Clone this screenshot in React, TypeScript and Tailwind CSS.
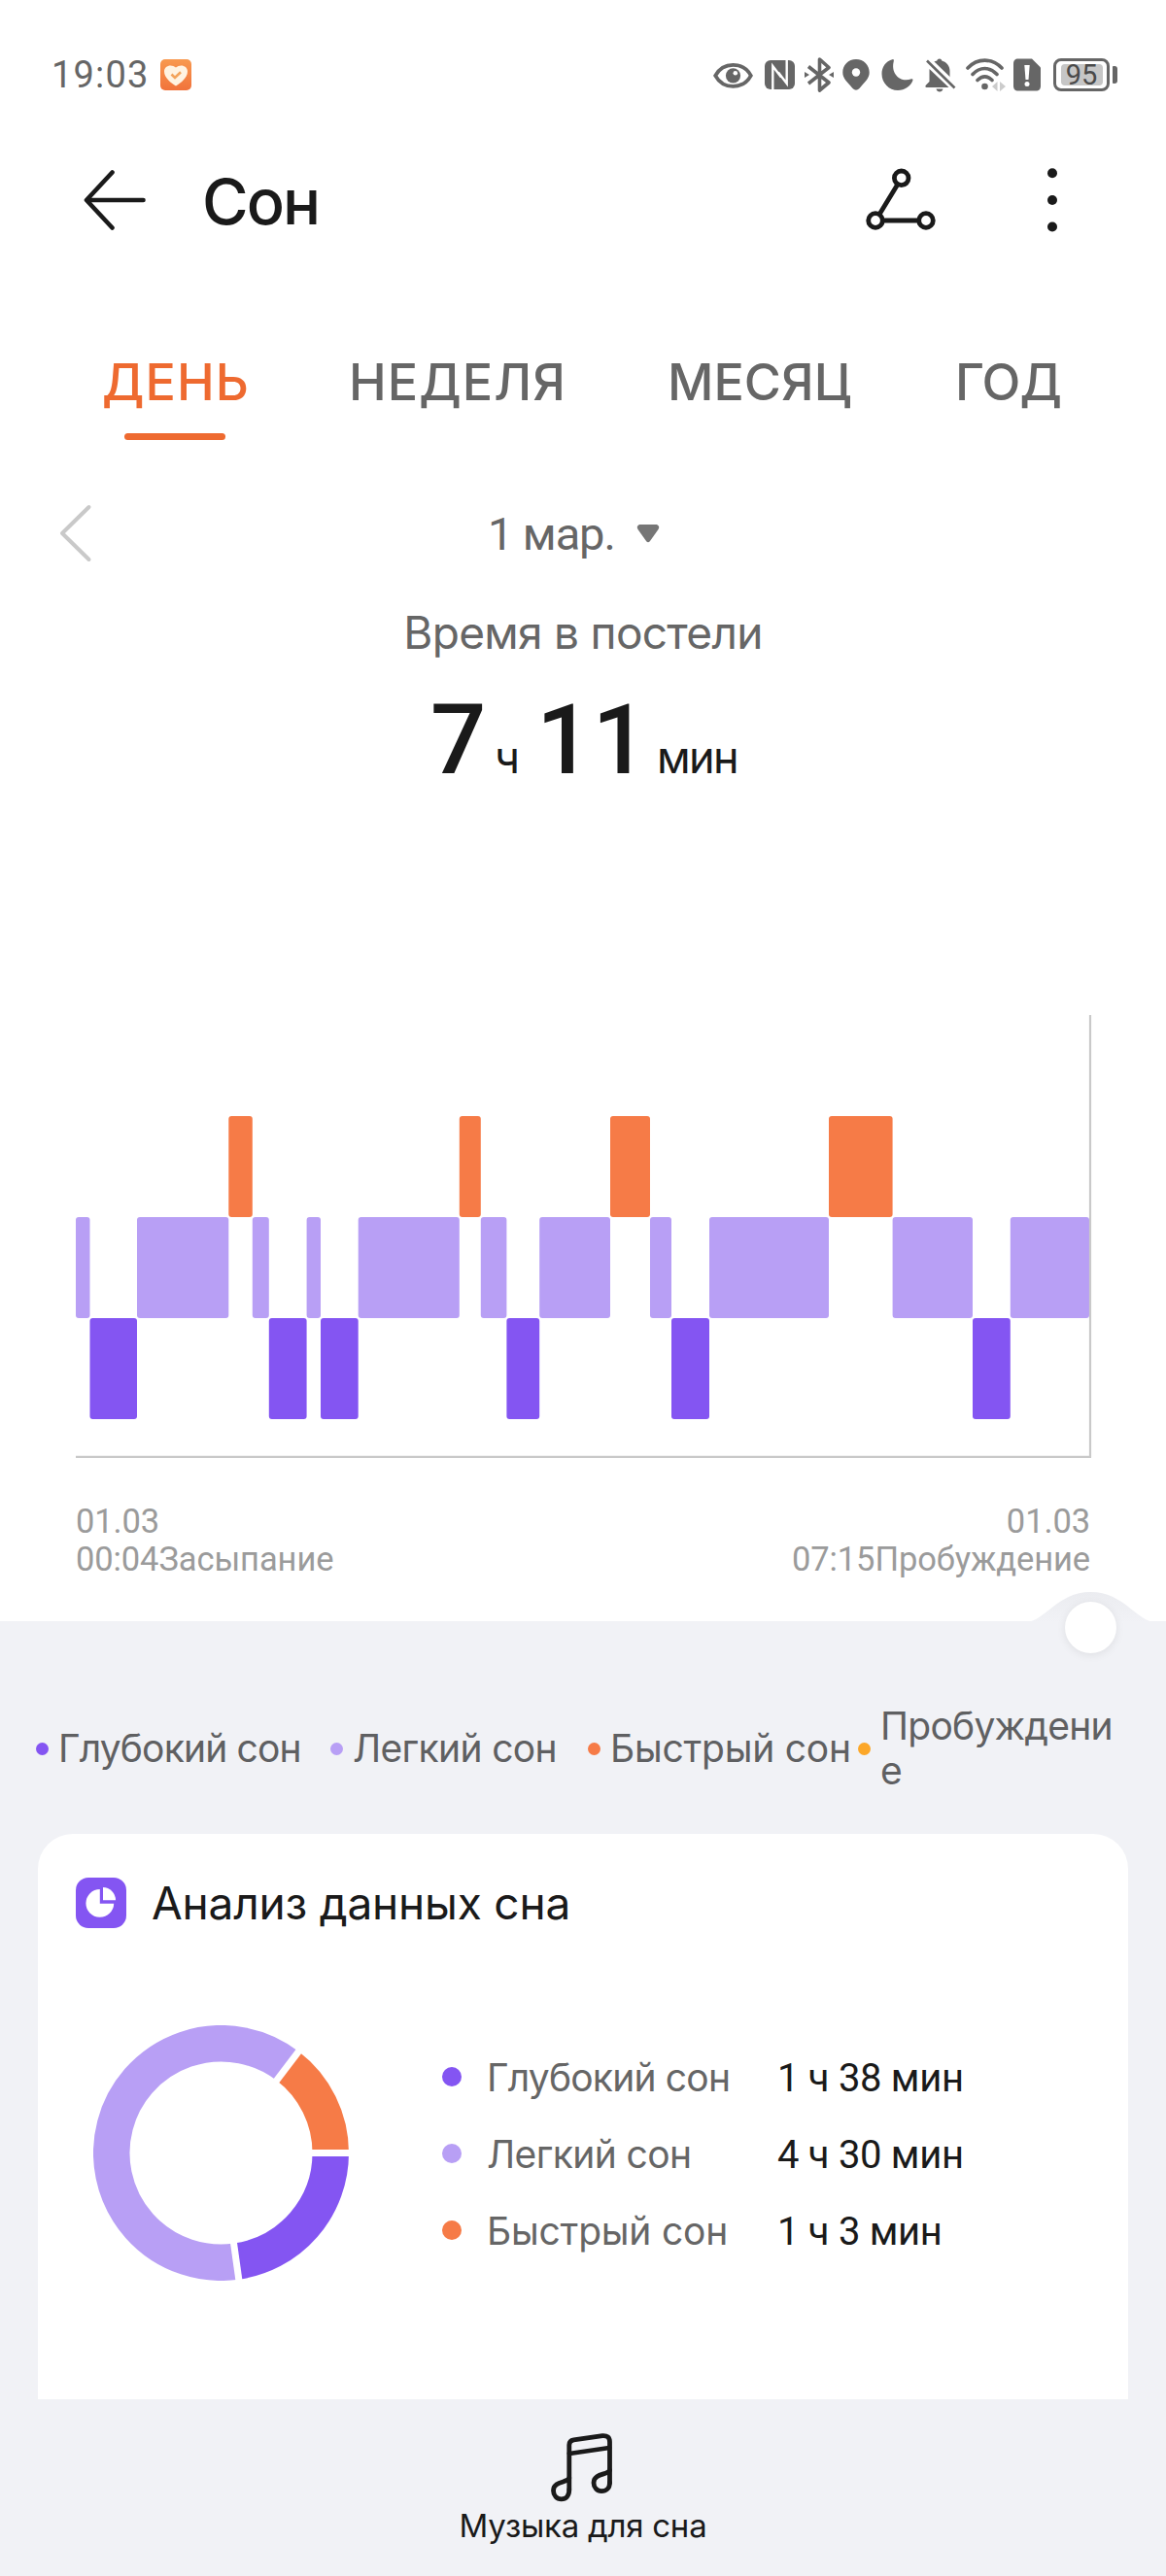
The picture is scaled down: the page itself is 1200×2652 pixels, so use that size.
import React from 'react';

const COLORS = {
  deep: '#8455f2',
  light: '#b89ff5',
  rem: '#f67b47',
  awake: '#fca728',
};

type Stage = 'deep' | 'light' | 'rem';

// Stage and its right edge on the time axis
const stages: [Stage, number][] = [
  ['light', 14.5],
  ['deep', 63],
  ['light', 157.3],
  ['rem', 181.8],
  ['light', 198.8],
  ['deep', 237.6],
  ['light', 252],
  ['deep', 290.7],
  ['light', 394.8],
  ['rem', 416.8],
  ['light', 443.4],
  ['deep', 477.2],
  ['light', 550],
  ['rem', 591],
  ['light', 613],
  ['deep', 652],
  ['light', 775],
  ['rem', 840.6],
  ['light', 923],
  ['deep', 961.8],
  ['light', 1043],
];

const stageTop = { rem: 104, light: 208, deep: 312 };

const tabs = [
  { label: 'ДЕНЬ', active: true, className: 'w-[254px] tracking-[1.1px]' },
  { label: 'НЕДЕЛЯ', active: false, className: 'w-[328px] tracking-[1.1px]' },
  { label: 'МЕСЯЦ', active: false, className: 'w-[296px]' },
  { label: 'ГОД', active: false, className: 'tracking-[-1px]' },
];

const legend = [
  { label: 'Глубокий сон', color: COLORS.deep, className: 'w-[303px] tracking-[-0.84px]' },
  { label: 'Легкий сон', color: COLORS.light, className: 'w-[265px] tracking-[-0.66px]' },
  { label: 'Быстрый сон', color: COLORS.rem, className: 'w-[278px] tracking-[-0.23px]' },
  { label: 'Пробуждение', color: COLORS.awake, className: 'w-[269px] tracking-[-0.74px]' },
];

const summary = [
  { label: 'Глубокий сон', value: '1 ч 38 мин', color: COLORS.deep, className: 'tracking-[-0.8px]' },
  { label: 'Легкий сон', value: '4 ч 30 мин', color: COLORS.light, className: 'tracking-[-0.6px]' },
  { label: 'Быстрый сон', value: '1 ч 3 мин', color: COLORS.rem, className: 'tracking-[-0.2px]' },
];

const StatusBar: React.FC = () => (
  <div className="flex h-[154px] items-center pl-[53px] text-[#666]">
    <span className="w-[112px] font-['Roboto',sans-serif] text-[38px] tracking-[1.2px]">19:03</span>
    <svg width="32" height="32" viewBox="0 0 32 32">
      <defs>
        <linearGradient id="app" x1="0" y1="0" x2="0" y2="1">
          <stop offset="0" stopColor="#f8994f" />
          <stop offset="1" stopColor="#f1733c" />
        </linearGradient>
      </defs>
      <rect width="32" height="32" rx="5" fill="url(#app)" />
      <path d="M16 27.5C11 24.5 4 19 4 12.5C4 6.5 11.5 4.5 16 8.5C20.5 4.5 28 6.5 28 12.5C28 19 21 24.5 16 27.5Z" fill="#fff3e2" />
      <path d="M11.5 15.5L15 19L21 13.2" fill="none" stroke="#f3a45c" strokeWidth="2.6" />
    </svg>

    {/* System icons */}
    <div className="ml-[537px] flex items-center">
      <svg className="mr-[12px]" width="41" height="36" viewBox="0 0 41 36">
        <path d="M2.2 18.8C7 10 13 7.8 20.5 7.8S34 10 38.8 18.8C34 27.5 28 29.8 20.5 29.8S7 27.5 2.2 18.8Z" fill="none" stroke="#666" strokeWidth="3.8" />
        <circle cx="20.5" cy="18.8" r="7.6" fill="#666" />
        <circle cx="22.8" cy="16.3" r="2.3" fill="#fff" />
      </svg>
      <svg className="mr-[10px]" width="31" height="36" viewBox="0 0 31 36">
        <rect x="0" y="3" width="31" height="30" rx="6" fill="#666" />
        <path d="M8.3 33.5V9L17 20.5M14 15.5L22.7 27V2.5" fill="none" stroke="#fff" strokeWidth="2.4" />
      </svg>
      <svg className="mr-[9px]" width="30" height="36" viewBox="0 0 30 36" fill="none" stroke="#666" strokeWidth="3.6" strokeLinejoin="round">
        <path d="M4 9.5L25 26L15.5 34V2L25 10.5L4 27" />
        <path d="M0 15L5 18L0 21ZM30 15L25 18L30 21Z" fill="#666" stroke="none" />
      </svg>
      <svg className="mr-[12px]" width="28" height="36" viewBox="0 0 28 36">
        <path d="M14 2C6 2 .3 8 .3 15.5C.3 21.5 4.5 25 8 29C10 31.2 11.5 33.8 14 33.8S18 31.2 20 29C23.5 25 27.7 21.5 27.7 15.5C27.7 8 22 2 14 2Z" fill="#666" />
        <circle cx="14" cy="15.5" r="4.2" fill="#fff" />
      </svg>
      <svg className="mr-[12px]" width="33" height="36" viewBox="0 0 33 36">
        <path d="M12 2C4 4 .5 10.5 .5 17C.5 26.5 8 34 17 34C24 34 30.5 29.5 32.5 23.5C32.5 22.3 31.8 22 31 22.3C19 26.5 9.5 16.5 12.8 4C13 2.8 12.8 2 12 2Z" fill="#666" />
      </svg>
      <svg className="mr-[10px]" width="32" height="36" viewBox="0 0 32 36">
        <path d="M15 1.5C16.2 1.5 17 2.3 17.3 3.5C22.5 5 25.5 9 25.5 14V22L28 28L10 10L6 6.5C8 5 10 4 12.3 3.5C12.6 2.3 13.5 1.5 15 1.5Z" fill="#666" />
        <path d="M4.5 12L24.5 31H1.5C.3 31 0 29.5 1 28.5L4.5 25Z" fill="#666" />
        <path d="M11.5 32.5H18.5C18 34.5 16.8 35.5 15 35.5S12 34.5 11.5 32.5Z" fill="#666" />
        <path d="M3 2.5L32 30.5" stroke="#fff" strokeWidth="6" />
        <path d="M2 3.5L30.5 31.5" stroke="#666" strokeWidth="2.6" />
      </svg>
      <svg className="mr-[8px]" width="41" height="36" viewBox="0 0 41 36" fill="none" stroke="#666" strokeWidth="3.6" strokeLinecap="round">
        <path d="M2 11C12 .5 27 .5 37 11M7 17.5C14.5 9.5 24.5 9.5 32 17.5M12 23.5C17 18.5 22 18.5 27 23.5" />
        <circle cx="19.5" cy="30" r="3.3" fill="#666" stroke="none" />
        <path d="M32.5 25V35L27 30ZM35 25V35L41 30Z" fill="#ccc" stroke="none" />
      </svg>
      <svg className="mr-[13px]" width="28" height="36" viewBox="0 0 28 36">
        <path d="M5 1.5H19L28 10.5V29.5C28 32.5 26.5 34.5 23 34.5H5C1.5 34.5 0 32.5 0 29.5V6.5C0 3.5 1.5 1.5 5 1.5Z" fill="#666" />
        <path d="M11.3 8H16.7L15.5 23H12.5Z" fill="#fff" />
        <circle cx="14" cy="27.5" r="2.5" fill="#fff" />
      </svg>
      <div className="flex h-[34px] w-[58px] items-center justify-center rounded-[8px] border-[3px] border-[#666]">
        <span className="flex h-[22px] w-[43px] items-center justify-center rounded-[4px] bg-[#c6c6c6] pt-[2px] font-['Roboto',sans-serif] text-[29px] text-[#4a4a4a]">95</span>
      </div>
      <div className="ml-[3px] h-[18px] w-[5px] rounded-r-[3px] rounded-l-[1px] bg-[#666]" />
    </div>
  </div>
);

const Header: React.FC = () => (
  <header className="flex h-[104px] items-center pl-[86px]">
    <svg width="66" height="64" viewBox="0 0 66 64" fill="none" stroke="#1a1a1a" strokeWidth="4.6" strokeLinecap="round" strokeLinejoin="round">
      <path d="M29.5 3.5L3 32L29.5 60.5M4 32H61.5" />
    </svg>
    <h1 className="ml-[56px] w-[683px] pt-[3px] text-[65px] leading-[80px] font-medium tracking-[-2px] text-[#1a1a1a]">Сон</h1>
    <svg width="74" height="68" viewBox="0 0 74 68" fill="none" stroke="#1a1a1a" strokeWidth="4.8">
      <circle cx="36.7" cy="11.3" r="7.3" />
      <circle cx="10" cy="55" r="7.3" />
      <circle cx="62" cy="55" r="7.3" />
      <path d="M33 17.5L14 48.8M17.3 55H54.7" />
    </svg>
    <svg className="ml-[113px]" width="12" height="66" viewBox="0 0 12 66" fill="#1a1a1a">
      <circle cx="5" cy="5.3" r="5" />
      <circle cx="5" cy="33" r="5" />
      <circle cx="5" cy="60.5" r="5" />
    </svg>
  </header>
);

const SleepChart: React.FC = () => (
  <svg className="mt-[235px] ml-[78px] block" width="1046" height="457" viewBox="0 0 1046 457">
    {stages.map(([stage, end], index) => {
      const start = index === 0 ? 0 : stages[index - 1][1];
      return (
        <rect key={index} x={start} y={stageTop[stage]} width={end - start} height="104" rx="3" fill={COLORS[stage]} />
      );
    })}
    <path d="M0 454.8H1045M1044 0V455.5" fill="none" stroke="#c9c9c9" strokeWidth="2.2" />
  </svg>
);

const Donut: React.FC = () => {
  const r = 112.75;
  const point = (deg: number, radius: number) => {
    const a = (deg * Math.PI) / 180;
    return `${131.5 + radius * Math.cos(a)} ${131.5 + radius * Math.sin(a)}`;
  };
  const arc = (from: number, to: number) =>
    `M${point(from, r)}A${r} ${r} 0 ${to - from > 180 ? 1 : 0} 1 ${point(to, r)}`;

  return (
    <svg width="263" height="263" viewBox="0 0 263 263" fill="none" strokeWidth="37.5">
      <path d={arc(0, 82)} stroke={COLORS.deep} />
      <path d={arc(82, 307.4)} stroke={COLORS.light} />
      <path d={arc(307.4, 360)} stroke={COLORS.rem} />
      {[0, 82, 307.4].map((deg) => (
        <path key={deg} d={`M${point(deg, 90)}L${point(deg, 136)}`} stroke="#fff" strokeWidth="7" />
      ))}
    </svg>
  );
};

const App: React.FC = () => {
  return (
    <div className="h-[2652px] w-[1200px] overflow-hidden bg-white font-['Inter','Noto_Sans',sans-serif]">
      <StatusBar />
      <Header />

      {/* Period tabs */}
      <nav className="flex pt-[106px] pl-[105px]">
        {tabs.map((tab) => (
          <div key={tab.label} className={`text-[52px] leading-[60px] font-medium ${tab.className} ${tab.active ? 'text-[#ee6a30]' : 'text-[#666]'}`}>
            {tab.label}
            {tab.active && <div className="mt-[22px] ml-[23px] h-[7px] w-[104px] rounded-full bg-[#ee6a30]" />}
          </div>
        ))}
      </nav>

      {/* Date picker */}
      <div className="mt-[66px] flex h-[60px] items-center pl-[60px]">
        <svg width="36" height="60" viewBox="0 0 36 60" fill="none" stroke="#c9c9c9" strokeWidth="4" strokeLinecap="round" strokeLinejoin="round">
          <path d="M31.5 3L4 30L31.5 57" />
        </svg>
        <span className="ml-[406px] w-[153px] pt-[3px] font-['Roboto',sans-serif] text-[47px] tracking-[-1.1px] text-[#666]">1 мар.</span>
        <svg width="24" height="20" viewBox="0 0 24 20">
          <path d="M3 1H21Q24.5 2.5 22.5 6L14 18Q12 20.5 10 18L1.5 6Q-.5 2.5 3 1Z" fill="#767676" />
        </svg>
      </div>

      {/* Time in bed */}
      <p className="mt-[42px] text-center text-[46px] leading-[60px] tracking-[-0.7px] text-[#666]">Время в постели</p>
      <div className="mt-[29px] flex h-[100px] items-baseline pt-[2px] pl-[443px] text-[45px] leading-[100px] text-[#1a1a1a]">
        <span className="w-[66px] font-['Roboto',sans-serif] text-[101px] font-medium">7</span>
        <span className="w-[43px]">ч</span>
        <span className="w-[124px] font-['Roboto',sans-serif] text-[101px] font-medium">11</span>
        <span className="tracking-[-1.6px]">мин</span>
      </div>

      <SleepChart />
      <div className="mt-[45px] flex h-[122px] justify-between pr-[78px] pl-[78px] font-['Roboto',sans-serif] text-[34.5px] leading-[39px] tracking-[-0.1px] text-[#9b9b9b]">
        <div>
          <p>01.03</p>
          <p>00:04Засыпание</p>
        </div>
        <div className="text-right">
          <p>01.03</p>
          <p>07:15Пробуждение</p>
        </div>
      </div>

      <main className="relative h-[801px] bg-[#f1f2f6] px-[39px] pt-[85px]">
        {/* Timeline handle */}
        <svg className="absolute -top-[31px] left-[1052px]" width="140" height="80" viewBox="0 0 140 80">
          <defs>
            <linearGradient id="bump" x1="0" y1="0" x2="0" y2="1">
              <stop offset="0" stopColor="#ebecf0" />
              <stop offset="1" stopColor="#f1f2f6" />
            </linearGradient>
          </defs>
          <path d="M3 32C23 32 36 1 70.5 1S118 32 138 32Z" fill="url(#bump)" />
        </svg>
        <div className="absolute -top-[20px] left-[1096px] size-[53px] rounded-full bg-white shadow-[0_2px_10px_rgba(0,0,0,0.08)]" />

        {/* Stage legend */}
        <div className="-ml-[2px] flex h-[92px] items-center">
          {legend.map((item) => (
            <div key={item.label} className={`flex shrink-0 items-center gap-[10px] text-[39px] leading-[46px] text-[#5f6062] ${item.className}`}>
              <span className="size-[13px] shrink-0 rounded-full" style={{ backgroundColor: item.color }} />
              <span className="break-all">{item.label}</span>
            </div>
          ))}
        </div>

        {/* Sleep analysis card */}
        <section className="mt-[42px] h-[582px] rounded-t-[36px] bg-white pt-[44px] pl-[39px]">
          <div className="flex items-center gap-[26px]">
            <svg width="52" height="52" viewBox="0 0 52 52">
              <rect width="52" height="52" rx="13" fill={COLORS.deep} />
              <path d="M24.8 12V26.8H39.2A14.4 14.4 0 1 1 24.8 12Z" fill="#fff" />
              <path d="M28 10A13.3 13.3 0 0 1 41 23.2H28Z" fill="#fff" />
            </svg>
            <h2 className="pt-[1px] text-[46px] leading-[52px] tracking-[-0.2px] text-[#1a1a1a]">Анализ данных сна</h2>
          </div>
          <div className="mt-[100px] flex items-center pl-[18px]">
            <Donut />
            <ul className="ml-[96px] text-[39px] leading-[79px]">
              {summary.map((item) => (
                <li key={item.label} className="flex h-[79px] items-center">
                  <span className="size-[20px] rounded-full" style={{ backgroundColor: item.color }} />
                  <span className={`ml-[26px] w-[299px] pt-[2px] text-[#666] ${item.className}`}>{item.label}</span>
                  <span className="pt-[3px] font-['Roboto',sans-serif] text-[40px] tracking-[-0.3px] text-[#1a1a1a]">{item.value}</span>
                </li>
              ))}
            </ul>
          </div>
        </section>
      </main>

      {/* Bottom action */}
      <footer className="flex h-[182px] flex-col items-center bg-[#f1f2f6] pt-[35px] text-[#1a1a1a]">
        <svg width="66" height="72" viewBox="0 0 66 72" fill="none" stroke="#1a1a1a" strokeWidth="4.8" strokeLinecap="round" strokeLinejoin="round">
          <path d="M18.8 58V12Q18.8 7.5 23.5 6.8L53 2.6Q60.5 2 60.5 9V51" />
          <path d="M19 21L60 15" />
          <path d="M18.8 46C18 51 2.5 49 2.5 59C2.5 64 6 67.8 10.7 67.8C15.5 67.8 18.8 64.5 18.8 58" />
          <path d="M60.5 38C59.5 43 44 41 44 51C44 56 47.5 59.7 52 59.7C57 59.7 60.5 56.5 60.5 51" />
        </svg>
        <span className="mt-[3px] text-[33px] leading-[40px] tracking-[-0.25px]">Музыка для сна</span>
      </footer>
    </div>
  );
};

export default App;
